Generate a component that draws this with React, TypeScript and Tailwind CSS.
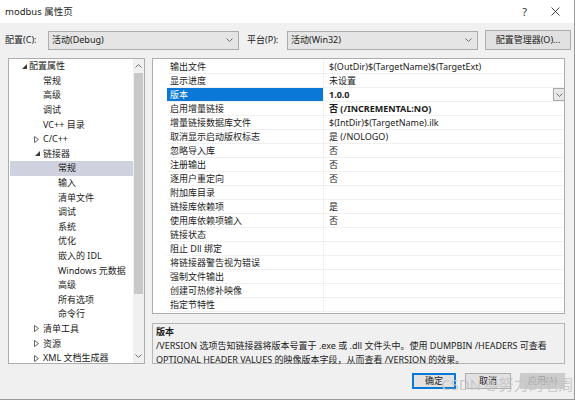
import React from "react";

type TreeItem = { t: string; lvl: number; exp?: boolean; col?: boolean; sel?: boolean };

const tree: TreeItem[] = [
  { t: "配置属性", lvl: 0, exp: true },
  { t: "常规", lvl: 1 },
  { t: "高级", lvl: 1 },
  { t: "调试", lvl: 1 },
  { t: "VC++ 目录", lvl: 1 },
  { t: "C/C++", lvl: 1, col: true },
  { t: "链接器", lvl: 1, exp: true },
  { t: "常规", lvl: 2, sel: true },
  { t: "输入", lvl: 2 },
  { t: "清单文件", lvl: 2 },
  { t: "调试", lvl: 2 },
  { t: "系统", lvl: 2 },
  { t: "优化", lvl: 2 },
  { t: "嵌入的 IDL", lvl: 2 },
  { t: "Windows 元数据", lvl: 2 },
  { t: "高级", lvl: 2 },
  { t: "所有选项", lvl: 2 },
  { t: "命令行", lvl: 2 },
  { t: "清单工具", lvl: 1, col: true },
  { t: "资源", lvl: 1, col: true },
  { t: "XML 文档生成器", lvl: 1, col: true },
];

type Prop = { name: string; value: string; bold?: boolean; sel?: boolean };

const props: Prop[] = [
  { name: "输出文件", value: "$(OutDir)$(TargetName)$(TargetExt)" },
  { name: "显示进度", value: "未设置" },
  { name: "版本", value: "1.0.0", bold: true, sel: true },
  { name: "启用增量链接", value: "否 (/INCREMENTAL:NO)", bold: true },
  { name: "增量链接数据库文件", value: "$(IntDir)$(TargetName).ilk" },
  { name: "取消显示启动版权标志", value: "是 (/NOLOGO)" },
  { name: "忽略导入库", value: "否" },
  { name: "注册输出", value: "否" },
  { name: "逐用户重定向", value: "否" },
  { name: "附加库目录", value: "" },
  { name: "链接库依赖项", value: "是" },
  { name: "使用库依赖项输入", value: "否" },
  { name: "链接状态", value: "" },
  { name: "阻止 Dll 绑定", value: "" },
  { name: "将链接器警告视为错误", value: "" },
  { name: "强制文件输出", value: "" },
  { name: "创建可热修补映像", value: "" },
  { name: "指定节特性", value: "" },
];

function Chevron({ up = false }: { up?: boolean }) {
  return (
    <svg width="7" height="4" viewBox="0 0 7 4" className="shrink-0">
      <polyline
        points={up ? "0.5,3.5 3.5,0.5 6.5,3.5" : "0.5,0.5 3.5,3.5 6.5,0.5"}
        fill="none"
        stroke="#707070"
        strokeWidth="1"
      />
    </svg>
  );
}

function Combo({ text, width }: { text: string; width: string }) {
  return (
    <div className={`${width} flex h-[19px] items-center justify-between border border-[#acacac] bg-[#e5e5e5] pl-[3px] pr-[5px]`}>
      <span>{text}</span>
      <Chevron />
    </div>
  );
}

export default function App() {
  return (
    <div
      className="relative flex h-[400px] w-[575px] flex-col overflow-hidden border-r border-b border-[#9a9a9a] bg-[#f0f0f0] text-[9px] leading-[14px] text-[#1b1b1b]"
      style={{ fontFamily: "'Noto Sans', 'Noto Sans CJK SC', sans-serif" }}
    >
      {/* title bar */}
      <div className="flex h-[23px] shrink-0 items-center bg-white pl-[5px]">
        <span className="text-[9.5px]">modbus 属性页</span>
        <span className="ml-auto mr-[24px] text-[11px] text-[#333]">?</span>
        <svg width="9" height="9" viewBox="0 0 9 9" className="mr-[14px]">
          <path d="M0.5 0.5 L8.5 8.5 M8.5 0.5 L0.5 8.5" stroke="#333" strokeWidth="0.9" />
        </svg>
      </div>

      {/* config row */}
      <div className="mt-[7px] flex h-[20px] shrink-0 items-center pl-[5px]">
        <span className="w-[43px]">配置(C):</span>
        <Combo text="活动(Debug)" width="w-[191px]" />
        <span className="ml-[8px] w-[40px]">平台(P):</span>
        <Combo text="活动(Win32)" width="w-[191px]" />
        <div className="ml-[7px] flex h-[20px] w-[86px] items-center justify-center border border-[#adadad] bg-[#e1e1e1]">
          配置管理器(O)...
        </div>
      </div>

      {/* body */}
      <div className="mt-[8px] flex pl-[8px]">
        {/* tree */}
        <div className="flex h-[306px] w-[137px] border border-[#adadad] bg-white">
          <div className="flex-1 pl-[1px]">
            {tree.map((it, i) => (
              <div
                key={i}
                className={`flex h-[14.6px] items-center ${it.sel ? "bg-[#cfd2de]" : ""}`}
                style={{ paddingLeft: [9, 23, 38][it.lvl] }}
              >
                <span className="flex w-[10px] shrink-0 items-center">
                  {it.exp && (
                    <svg width="5" height="5" viewBox="0 0 5 5" className={it.lvl === 0 ? "ml-[3px]" : "ml-[2px]"}>
                      <polygon points="5,0 5,5 0,5" fill="#3a3a3a" />
                    </svg>
                  )}
                  {it.col && (
                    <svg width="5" height="7" viewBox="0 0 5 7" className="ml-[1px]">
                      <polygon points="0.5,0.5 4.5,3.5 0.5,6.5" fill="none" stroke="#555" strokeWidth="0.9" />
                    </svg>
                  )}
                </span>
                <span>{it.t}</span>
              </div>
            ))}
          </div>
          {/* scrollbar */}
          <div className="flex w-[11px] flex-col items-center bg-[#f0f0f0]">
            <div className="flex h-[14px] items-center">
              <Chevron up />
            </div>
            <div className="h-[221px] w-[9px] bg-[#c8c8c8]" />
            <div className="flex-1" />
            <div className="flex h-[14px] items-center">
              <Chevron />
            </div>
          </div>
        </div>

        {/* right side */}
        <div className="ml-[7px] flex w-[413px] flex-col">
          <div className="h-[256px] border border-[#adadad] bg-white pt-[1px]">
            {props.map((p, i) => (
              <div key={i} className="flex h-[14px]">
                <div className="w-[14px] shrink-0" />
                <div
                  className={`flex w-[156px] shrink-0 items-center border-b border-[#f0f0f0] pl-[3px] ${
                    p.sel ? "bg-[#0a78d6] text-white" : ""
                  }`}
                >
                  {p.name}
                </div>
                <div className="flex flex-1 items-center border-b border-l border-[#f0f0f0] pl-[5px]">
                  <span className={p.bold ? "font-bold" : ""}>{p.value}</span>
                  {p.sel && (
                    <div className="ml-auto mr-[-1px] flex h-[13px] w-[12px] items-center justify-center border border-[#a8a8a8] bg-[#e8e8e8]">
                      <Chevron />
                    </div>
                  )}
                </div>
              </div>
            ))}
          </div>

          <div className="mt-[9px] h-[41px] border border-[#b4b4b4] bg-[#f0f0f0] px-[3px] pt-[1px]">
            <div className="font-bold">版本</div>
            <div>/VERSION 选项告知链接器将版本号置于 .exe 或 .dll 文件头中。使用 DUMPBIN /HEADERS 可查看</div>
            <div>OPTIONAL HEADER VALUES 的映像版本字段，从而查看 /VERSION 的效果。</div>
          </div>
        </div>
      </div>

      {/* buttons */}
      <div className="mt-[9px] flex justify-end pr-[9px]">
        <div className="flex h-[16px] w-[44px] items-center justify-center border-2 border-[#0a78d6] bg-[#e1e1e1]">确定</div>
        <div className="ml-[9px] flex h-[16px] w-[46px] items-center justify-center border border-[#adadad] bg-[#e1e1e1]">取消</div>
        <div className="ml-[9px] flex h-[16px] w-[45px] items-center justify-center border border-[#cccccc] bg-[#cccccc] text-[#a0a0a0]">
          应用(A)
        </div>
      </div>

      {/* watermark over the buttons */}
      <div className="absolute left-[441px] top-[374px] text-[15px] leading-[20px] text-[#c6c6c6] opacity-90">
        CSDN @努力的老周
      </div>
    </div>
  );
}
